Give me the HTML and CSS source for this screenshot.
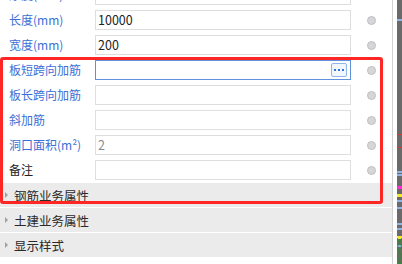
FILE: index.html
```html
<!DOCTYPE html>
<html lang="zh-CN">
<head>
    <meta charset="UTF-8">
    <title>属性</title>
    <link rel="stylesheet" href="styles.css">
</head>
<body>
    <div class="frame">
        <!-- Property list -->
        <div class="panel">
            <div class="row">
                <span class="label">厚度(mm)</span>
                <div class="field"></div>
                <span class="dot-cell"><i class="dot"></i></span>
            </div>
            <div class="row">
                <span class="label">长度(mm)</span>
                <div class="field">10000</div>
                <span class="dot-cell"><i class="dot"></i></span>
            </div>
            <div class="row">
                <span class="label">宽度(mm)</span>
                <div class="field">200</div>
                <span class="dot-cell"><i class="dot"></i></span>
            </div>
            <div class="row">
                <span class="label">板短跨向加筋</span>
                <div class="field active"><span class="more"><i></i><i></i><i></i></span></div>
                <span class="dot-cell"><i class="dot"></i></span>
            </div>
            <div class="row">
                <span class="label">板长跨向加筋</span>
                <div class="field"></div>
                <span class="dot-cell"><i class="dot"></i></span>
            </div>
            <div class="row">
                <span class="label">斜加筋</span>
                <div class="field"></div>
                <span class="dot-cell"><i class="dot"></i></span>
            </div>
            <div class="row">
                <span class="label">洞口面积(m²)</span>
                <div class="field muted">2</div>
                <span class="dot-cell"><i class="dot"></i></span>
            </div>
            <div class="row">
                <span class="label plain">备注</span>
                <div class="field"></div>
                <span class="dot-cell"><i class="dot"></i></span>
            </div>

            <!-- Collapsed groups -->
            <div class="group"><span class="arrow"></span>钢筋业务属性</div>
            <div class="group"><span class="arrow"></span>土建业务属性</div>
            <div class="group"><span class="arrow"></span>显示样式</div>
        </div>

        <div class="gap"></div>

        <!-- Scrollbar with markers -->
        <div class="scrollbar">
            <i class="mark blue" style="top: 19px"></i>
            <i class="mark red" style="top: 134px"></i>
            <i class="mark red" style="top: 147px"></i>
            <i class="mark blue" style="top: 171px"></i>
            <i class="mark blue" style="top: 174px"></i>
            <i class="mark pink" style="top: 186px"></i>
            <i class="mark yellow" style="top: 194px"></i>
            <i class="mark blue" style="top: 200px"></i>
            <i class="mark blue" style="top: 207px"></i>
            <i class="mark blue" style="top: 223px"></i>
            <i class="mark blue" style="top: 228px"></i>
            <i class="mark yellow" style="top: 236px"></i>
            <i class="mark blue" style="top: 245px"></i>
            <svg class="wave" width="5" height="28" viewBox="0 0 5 28">
                <path d="M0 0 L5 9 L0 18 L5 28" stroke="#2e8b2e" fill="none"/>
                <path d="M5 0 L0 9 L5 18 L0 28" stroke="#2e8b2e" fill="none"/>
            </svg>
        </div>

        <!-- Highlight box -->
        <div class="highlight"></div>
    </div>
</body>
</html>
```

FILE: styles.css
```css
body {
    margin: 0;
    padding: 0;
    background-color: #fff;
    font-family: "Noto Sans CJK SC", "Noto Sans", sans-serif;
    font-size: 12px;
    overflow: hidden;
}
.frame {
    position: relative;
    display: flex;
    width: 402px;
    height: 264px;
    overflow: hidden;
}
.panel {
    width: 392px;
    margin-top: -18px;
    border-right: 1px solid #d2d2d2;
}
.row {
    display: flex;
    height: 25px;
    padding-top: 3px;
    box-sizing: border-box;
}
.label {
    width: 95px;
    padding-left: 9px;
    box-sizing: border-box;
    color: #3b6fd6;
    line-height: 20px;
    white-space: nowrap;
}
.label.plain {
    color: #222;
}
.field {
    position: relative;
    width: 256px;
    height: 20px;
    box-sizing: border-box;
    border: 1px solid #dedede;
    padding-left: 2px;
    line-height: 18px;
    font-size: 12.5px;
    color: #222;
}
.field.active {
    border-color: #5e92dc;
}
.field.muted {
    color: #8a8a8a;
}
.more {
    position: absolute;
    right: 3px;
    top: 2px;
    width: 16px;
    height: 14px;
    box-sizing: border-box;
    border: 1px solid #8fb6ec;
    border-radius: 2px;
    background-color: #f2f7fe;
    display: flex;
    align-items: center;
    justify-content: center;
    gap: 2px;
}
.more i {
    width: 2px;
    height: 2px;
    background-color: #2f74de;
}
.dot-cell {
    width: 41px;
    height: 20px;
    display: flex;
    align-items: center;
    justify-content: center;
}
.dot {
    width: 9px;
    height: 9px;
    box-sizing: border-box;
    border-radius: 50%;
    background-color: #d6d6d8;
    border: 1px solid #bfbfc2;
}
.group {
    display: flex;
    align-items: center;
    height: 24px;
    margin-top: 1px;
    background-color: #ebebeb;
    color: #2a2a2a;
    font-size: 12.5px;
}
.arrow {
    width: 0;
    height: 0;
    margin: 0 6px 0 5px;
    border-top: 3px solid transparent;
    border-bottom: 3px solid transparent;
    border-left: 3px solid #a0a0a0;
}
.gap {
    width: 4px;
}
.scrollbar {
    position: relative;
    width: 5px;
    background-color: #6a6a6a;
}
.mark {
    position: absolute;
    left: 0;
    width: 5px;
    height: 2px;
}
.mark.blue { background-color: #8fb4e6; }
.mark.red { background-color: #d33; height: 1px; }
.mark.pink { background-color: #ff2bd6; height: 3px; }
.mark.yellow { background-color: #f4ea2a; height: 3px; }
.wave {
    position: absolute;
    left: 0;
    top: 238px;
}
.highlight {
    position: absolute;
    left: 0;
    top: 57px;
    width: 383px;
    height: 147px;
    box-sizing: border-box;
    border: 3px solid #ff2626;
    border-radius: 3px;
    pointer-events: none;
}
```
